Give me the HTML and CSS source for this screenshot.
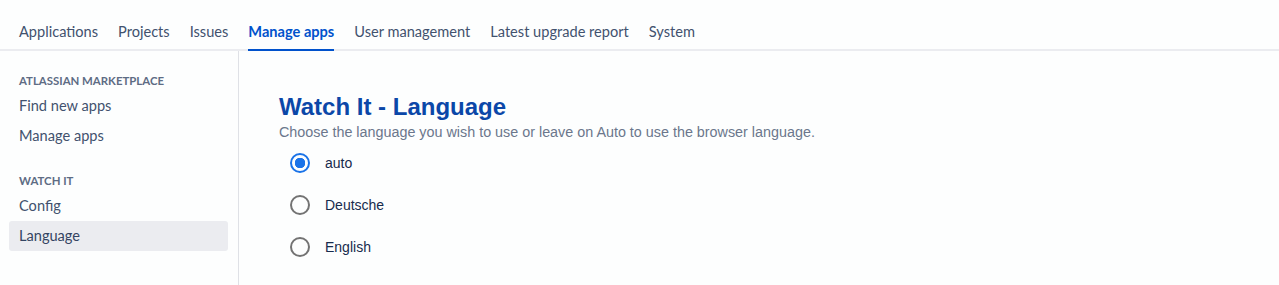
FILE: index.html
```html
<!DOCTYPE html>
<html lang="en">
<head>
  <title>Watch It - Language</title>
  <link rel="stylesheet" href="styles.css">
</head>
<body>
  <nav class="top-nav">
    <a href="#">Applications</a>
    <a href="#">Projects</a>
    <a href="#">Issues</a>
    <a href="#" class="active">Manage apps</a>
    <a href="#">User management</a>
    <a href="#">Latest upgrade report</a>
    <a href="#">System</a>
  </nav>

  <div class="layout">
    <aside class="sidebar">
      <div class="side-group">
        <h4>Atlassian Marketplace</h4>
        <a href="#">Find new apps</a>
        <a href="#">Manage apps</a>
      </div>
      <div class="side-group">
        <h4>Watch It</h4>
        <a href="#">Config</a>
        <a href="#" class="selected">Language</a>
      </div>
    </aside>

    <main class="content">
      <h1>Watch It - Language</h1>
      <p class="hint">Choose the language you wish to use or leave on Auto to use the browser language.</p>
      <form class="lang-form">
        <label class="lang-option"><input type="radio" name="lang" value="auto" checked> auto</label>
        <label class="lang-option"><input type="radio" name="lang" value="de"> Deutsche</label>
        <label class="lang-option"><input type="radio" name="lang" value="en"> English</label>
      </form>
    </main>
  </div>
</body>
</html>
```

FILE: styles.css
```css
body {
  margin: 0;
  background: #fdfefe;
  color: #172b4d;
  font-family: Lato, 'Open Sans', sans-serif;
  overflow: hidden;
}

.top-nav {
  display: flex;
  gap: 20px;
  height: 49px;
  padding-left: 19px;
  border-bottom: 2px solid #ebecf0;
}

.top-nav a {
  display: flex;
  align-items: center;
  font-size: 14.6px;
  color: #42526e;
  text-decoration: none;
  padding-top: 13px;
  box-sizing: border-box;
  height: 51px;
  border-bottom: 2px solid transparent;
  margin-bottom: -2px;
}

.top-nav a.active {
  color: #0052cc;
  font-weight: 700;
  border-bottom-color: #0052cc;
}

.layout {
  display: flex;
}

.sidebar {
  width: 219px;
  min-height: 214px;
  padding: 20px 10px 0 9px;
  border-right: 1px solid #dfe1e6;
}

.side-group {
  display: flex;
  flex-direction: column;
  margin-bottom: 20px;
}

.side-group h4 {
  margin: 2px 0 2px 10px;
  font-size: 11.4px;
  line-height: 16px;
  font-weight: 700;
  text-transform: uppercase;
  color: #5e6c84;
}

.side-group a {
  height: 30px;
  line-height: 29px;
  padding: 0 10px;
  font-size: 14.6px;
  color: #42526e;
  text-decoration: none;
  border-radius: 3px;
}

.side-group a.selected {
  background: #ebecf0;
  color: #344563;
}

.content {
  padding: 41px 40px 0;
  font-family: 'Liberation Sans', Arial, sans-serif;
}

.content h1 {
  margin: 0;
  font-size: 24px;
  line-height: 30px;
  color: #0b47a8;
}

.hint {
  margin: 0;
  font-size: 14.35px;
  line-height: 20px;
  color: #6b778c;
}

.lang-form {
  display: flex;
  flex-direction: column;
}

.lang-option {
  display: flex;
  align-items: center;
  gap: 15px;
  height: 42px;
  padding-left: 11px;
  font-size: 14px;
  color: #172b4d;
}

.lang-option input {
  appearance: none;
  box-sizing: border-box;
  width: 20px;
  height: 20px;
  margin: 0;
  border: 2px solid #737373;
  border-radius: 50%;
}

.lang-option input:checked {
  border-color: #1a73e8;
  background: radial-gradient(circle, #1a73e8 0 5px, transparent 5.5px);
}
```
